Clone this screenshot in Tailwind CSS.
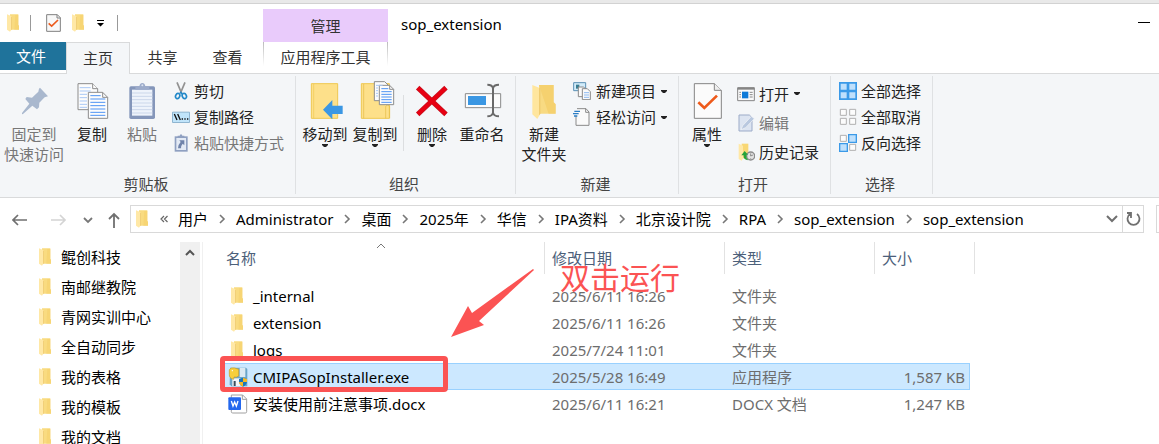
<!DOCTYPE html>
<html lang="zh-CN">
<head>
    <meta charset="UTF-8">
    <meta name="viewport" content="width=device-width, initial-scale=1.0">
    <title>sop_extension</title>
    <script src="https://cdn.jsdelivr.net/npm/@tailwindcss/browser@4"></script>
</head>
<body class="flex h-screen flex-col overflow-hidden bg-white font-['Noto_Sans','Noto_Sans_CJK_SC',sans-serif] text-[15px] leading-5 text-black">
    <!-- Shared icons -->
    <svg class="hidden">
        <symbol id="folder" viewBox="0 0 36 54">
            <path d="M9 1H34V33L36 35V47H9Z" fill="#f9db80"/>
            <path d="M25 3H34V33L36 35V47H22Z" fill="#f5d06c" opacity=".6"/>
            <path d="M0 1L14 7V46L9 53L0 47Z" fill="#ffe8a6"/>
            <path d="M12 8H14V46L12 49Z" fill="#ecc569"/>
        </symbol>
        <symbol id="down" viewBox="0 0 6 3"><path d="M0 0H6V1L4 3H2L0 1Z" fill="#222"/></symbol>
        <symbol id="crumb" viewBox="0 0 6 10"><path d="M1 1L5 5L1 9" fill="none" stroke="#777" stroke-width="1.6"/></symbol>
    </svg>

    <!-- Title bar and tabs -->
    <div class="h-1 shrink-0 border-b border-[#d2d2d2] bg-[#e9e9e9]"></div>
    <header class="flex h-[70px] shrink-0 border-b border-[#d9dadb]">
        <div class="w-[263px]">
            <div class="flex h-[38px] items-center pl-[7px]">
                <svg class="h-[18px] w-3"><use href="#folder"/></svg>
                <span class="ml-[11px] h-4 w-px bg-[#999]"></span>
                <button aria-label="属性" class="ml-[15px]">
                    <svg class="h-[18px] w-[15px]" viewBox="0 0 45 54"><path d="M2 2H34L43 11V52H2Z" fill="#f8f8f8" stroke="#808080" stroke-width="3"/><path d="M33 2V12H43" fill="none" stroke="#808080" stroke-width="3"/><path d="M8 28L17 36L36 18" fill="none" stroke="#ec5a1c" stroke-width="5"/></svg>
                </button>
                <button aria-label="新建文件夹" class="ml-[11px]"><svg class="h-[18px] w-3"><use href="#folder"/></svg></button>
                <button aria-label="自定义快速访问工具栏" class="ml-[13px]">
                    <svg class="h-[7px] w-[7px]" viewBox="0 0 7 7"><path d="M0 0H7V1H0ZM0 3H7L3.500 6.500Z"/></svg>
                </button>
                <span class="ml-[13px] h-4 w-px bg-[#999]"></span>
            </div>
            <nav class="flex h-8 text-[#333]">
                <button class="h-7 w-[66px] bg-[#1f739b] pr-1 text-white">文件</button>
                <button class="h-8 w-16 border border-b-0 border-[#d9dadb] bg-[#f4f6f8] pb-0.5">主页</button>
                <button class="h-[31px] w-[65px] pb-0.5">共享</button>
                <button class="h-[31px] w-[65px] pb-0.5">查看</button>
            </nav>
        </div>
        <div class="mt-[5px] w-[125px] text-center text-[#333]">
            <div class="h-[33px] bg-[#e9cbfb] leading-[34px]">管理</div>
            <div class="flex h-[31px] items-start justify-between">
                <span class="h-6 w-px bg-linear-to-b from-[#bbb] to-white"></span>
                <button class="h-[31px] pb-0.5">应用程序工具</button>
                <span class="h-6 w-px bg-linear-to-b from-[#bbb] to-white"></span>
            </div>
        </div>
        <h1 class="flex-1 pt-[10px] pl-[13px]">sop_extension</h1>
        <button aria-label="最小化" class="mt-[18px] mr-[9px] h-px w-3 bg-black"></button>
    </header>

    <!-- Ribbon -->
    <div class="flex h-[124px] shrink-0 border-b border-[#d9dadb] bg-[#f4f6f8] text-[#222]">
        <section class="mt-0.5 mb-[3px] flex w-[296px] flex-col border-r border-[#dfe1e3]">
            <div class="flex h-[98px]">
                <button class="flex w-[68px] flex-col items-center pt-[7px] text-[#777]">
                    <svg class="mb-[5px] h-9 w-9" viewBox="0 0 108 108"><path d="M72 14L96 40L86 43L70 59L69 73L63 79L49 68L21 93L18 94V90L40 62L28 48L32 42L48 44L67 26L69 17Z" fill="#a9b8ce"/></svg>
                    固定到<br>快速访问
                </button>
                <button class="flex w-12 flex-col items-center pt-[7px]">
                    <svg class="mb-[5px] h-9 w-9" viewBox="0 0 108 108">
                        <g fill="#fcfcfc" stroke="#8c8c8c" stroke-width="3"><path d="M12 2H56L71 17V80H12Z"/><path d="M56 2V17H71" /><path d="M43 28H86L101 43V106H43Z"/><path d="M86 28V43H101" fill="none"/></g>
                        <path d="M17 14H50M17 24H50M17 34H39M17 44H39M17 54H39M17 64H39M17 73H39" stroke="#a9c8f5" stroke-width="3"/>
                        <path d="M49 38H80M49 48H94M49 58H94M49 68H94M49 78H94M49 88H94M49 97H94" stroke="#4e93f3" stroke-width="3"/>
                    </svg>
                    复制
                </button>
                <button class="flex w-[52px] flex-col items-center pt-[7px] text-[#777]">
                    <svg class="mb-[5px] h-9 w-9" viewBox="0 0 108 108">
                        <rect x="16" y="10" width="77" height="98" rx="5" fill="#8496ba"/><path d="M24 20H85V98H24Z" fill="#eef3fb"/>
                        <path d="M24 30H85M24 40H85M24 50H85M24 60H85M24 70H85M24 80H85M24 90H85" stroke="#cbd7ea" stroke-width="3"/>
                        <path d="M34 20V10H46Q48 0 55 0Q62 0 64 10H76V20Z" fill="#9cabca"/><circle cx="55" cy="7" r="3" fill="#dce3ef"/>
                    </svg>
                    粘贴
                </button>
                <div class="flex-1 pt-0.5 pl-1">
                    <button class="flex h-[26px] items-center gap-1">
                        <svg class="h-[18px] w-[18px]" viewBox="0 0 54 54"><path d="M15 1L29 34M39 1L25 34" stroke="#929292" stroke-width="5"/><g fill="none" stroke="#2389c9" stroke-width="5"><path d="M25 29L30 36"/><ellipse cx="17" cy="42" rx="6" ry="8" transform="rotate(25 17 42)"/><ellipse cx="37" cy="42" rx="6" ry="8" transform="rotate(-25 37 42)"/></g></svg>
                        剪切
                    </button>
                    <button class="flex h-[26px] items-center gap-1">
                        <svg class="h-[18px] w-[18px]" viewBox="0 0 54 54"><path d="M1.500 12.500H52.500V43.500H1.500Z" fill="#c0e4fa" stroke="#8fb5d0" stroke-width="3"/><path d="M7 18L15 36M17 18L25 36" stroke="#111" stroke-width="4"/><path d="M29 33H33M37 33H41M45 33H49" stroke="#111" stroke-width="4"/></svg>
                        复制路径
                    </button>
                    <button class="flex h-[26px] items-center gap-1 text-[#777]">
                        <svg class="h-[18px] w-[18px]" viewBox="0 0 54 54"><path d="M8 7H47V53H8Z" fill="#8fa0c1"/><path d="M13 12H42V48H13Z" fill="#e3eaf5"/><path d="M17 11V5H23Q27-3 31 5H37V11Z" fill="#8fa0c1"/><path d="M22 19H37V34L32 29Q27 34 27 43H18Q18 32 26 24Z" fill="#6f83aa"/></svg>
                        粘贴快捷方式
                    </button>
                </div>
            </div>
            <h2 class="pr-[3px] text-center text-[#444]">剪贴板</h2>
        </section>

        <section class="mt-0.5 mb-[3px] flex w-[220px] flex-col border-r border-[#dfe1e3]">
            <div class="flex h-[98px] pl-1">
                <button class="flex w-[50px] flex-col items-center pt-[7px]">
                    <svg class="mb-[5px] h-9 w-9" viewBox="0 0 108 108"><path d="M13 2H92V106H13Z" fill="#fde08a" stroke="#efc851" stroke-width="3"/><path d="M20 3V106" stroke="#efc851" stroke-width="2"/><path d="M48 80L76 51V68H107V93H76V109Z" fill="#3b97e3"/></svg>
                    移动到
                    <svg class="h-[3px] w-1.5"><use href="#down"/></svg>
                </button>
                <button class="flex w-[50px] flex-col items-center pt-[7px]">
                    <svg class="mb-[5px] h-9 w-9 overflow-visible" viewBox="0 0 108 108">
                        <path d="M13 2H97V106H13Z" fill="#fde08a" stroke="#efc851" stroke-width="3"/><path d="M20 3V106M86 106V70Q92 62 98 70V106" fill="none" stroke="#e4bb45" stroke-width="2"/>
                        <g fill="#fcfcfc" stroke="#8c8c8c" stroke-width="3"><path d="M52-4H83L94 7V53H52Z"/><path d="M67 7H98L110 19V65H67Z"/><path d="M98 7V19H110" fill="none"/></g>
                        <path d="M57 7H77M57 15H63M57 23H63M57 31H63M57 39H63" stroke="#a9c8f5" stroke-width="3"/>
                        <path d="M73 17H94M73 26H104M73 34H104M73 42H104M73 50H104M73 58H104" stroke="#4e93f3" stroke-width="3"/>
                    </svg>
                    复制到
                    <svg class="h-[3px] w-1.5"><use href="#down"/></svg>
                </button>
                <span class="mx-[3px] mt-[19px] h-14 w-px bg-[#dcdee0]"></span>
                <button class="flex w-[50px] flex-col items-center pt-[7px]">
                    <svg class="mb-[5px] h-9 w-9" viewBox="0 0 108 108"><path d="M11 14L96 94M96 14L11 94" stroke="#c9101e" stroke-width="15"/><path d="M12 15L95 93M95 15L12 93" stroke="#e80012" stroke-width="11"/></svg>
                    删除
                    <svg class="h-[3px] w-1.5"><use href="#down"/></svg>
                </button>
                <button class="flex w-[50px] flex-col items-center pt-[7px]">
                    <svg class="mb-[5px] h-9 w-9 overflow-visible" viewBox="0 0 108 108"><path d="M4 32H110V74H4Z" fill="#fcfcfc" stroke="#8a8a8a" stroke-width="3"/><path d="M12 39H66V66H12Z" fill="#3b97e3"/><path d="M87 12V94M70 5Q85 5 87 16Q89 5 105 5M70 100Q85 100 87 89Q89 100 105 100" fill="none" stroke="#6a6a6a" stroke-width="6"/></svg>
                    重命名
                </button>
            </div>
            <h2 class="pr-[3px] text-center text-[#444]">组织</h2>
        </section>

        <section class="mt-0.5 mb-[3px] flex w-[163px] flex-col border-r border-[#dfe1e3]">
            <div class="flex h-[98px] pl-[3px]">
                <button class="flex w-[50px] flex-col items-center pt-[7px]">
                    <svg class="mb-[5px] h-9 w-9" viewBox="0 0 108 108"><path d="M39 6H83V58L89 64V92H39Z" fill="#f8da82"/><path d="M39 6H83V58L89 64V92H68Z" fill="#f1c75c" opacity=".5"/><path d="M19 6L43 16V92L34 108L19 94Z" fill="#ffe69e"/><path d="M40 15L43 16V92L40 97Z" fill="#e9bf5b"/></svg>
                    新建<br>文件夹
                </button>
                <div class="pt-0.5 pl-1">
                    <button class="flex h-[26px] items-center gap-[5px]">
                        <svg class="h-[18px] w-[18px]" viewBox="0 0 54 54"><path d="M2 2H38V26H2Z" fill="#d3ecfa" stroke="#5b90b5" stroke-width="3"/><path d="M9 8H19V20H9Z" fill="#3a7d91"/><g fill="#fafafa" stroke="#8a8a8a" stroke-width="3"><path d="M16 15H31L40 22V44H16Z"/><path d="M28 20H43L52 29V53H28Z"/></g><path d="M33 32H48M33 39H48M33 46H48" stroke="#8ebaf0" stroke-width="3"/></svg>
                        新建项目
                        <svg class="h-[3px] w-1.5"><use href="#down"/></svg>
                    </button>
                    <button class="flex h-[26px] items-center gap-[5px]">
                        <svg class="h-[18px] w-[18px]" viewBox="0 0 54 54"><path d="M12 2H39L48 12V52H9V24" fill="#fafafa" stroke="#8a8a8a" stroke-width="3"/><path d="M38 2V13H48" fill="none" stroke="#8a8a8a" stroke-width="3"/><path d="M4 10H21M0 17H17M3 24H13" stroke="#2b7dc4" stroke-width="4"/></svg>
                        轻松访问
                        <svg class="h-[3px] w-1.5"><use href="#down"/></svg>
                    </button>
                </div>
            </div>
            <h2 class="pr-[3px] text-center text-[#444]">新建</h2>
        </section>

        <section class="mt-0.5 mb-[3px] flex w-[152px] flex-col border-r border-[#dfe1e3]">
            <div class="flex h-[98px] pl-[3px]">
                <button class="flex w-[50px] flex-col items-center pt-[7px]">
                    <svg class="mb-[5px] h-9 w-9" viewBox="0 0 108 108"><path d="M16 2H76L97 22V106H16Z" fill="#fbfbfb" stroke="#858585" stroke-width="3"/><path d="M76 2V22H97" fill="#eee" stroke="#858585" stroke-width="3"/><path d="M28 58L46 75L84 38" fill="none" stroke="#ee5a1b" stroke-width="8"/></svg>
                    属性
                    <svg class="h-[3px] w-1.5"><use href="#down"/></svg>
                </button>
                <div class="pt-[3px] pl-[5px]">
                    <button class="flex h-[29px] items-center gap-1">
                        <svg class="h-[18px] w-[18px]" viewBox="0 0 54 54"><path d="M2 8H52V47H2Z" fill="#fafafa" stroke="#858585" stroke-width="3"/><path d="M2 8H52V14H2Z" fill="#858585"/><path d="M15 20H34V40H15Z" fill="#0f7bd8"/><path d="M7 22H12M7 29H12M7 36H12M38 22H47M38 29H47M38 36H47" stroke="#888" stroke-width="3"/></svg>
                        打开
                        <svg class="ml-px h-[3px] w-1.5"><use href="#down"/></svg>
                    </button>
                    <button class="flex h-[29px] items-center gap-1 text-[#777]">
                        <svg class="h-[18px] w-[18px]" viewBox="0 0 54 54"><path d="M6 3H37L45 11V51H6Z" fill="#dce4f1" stroke="#9cabc8" stroke-width="3"/><path d="M12 47L17 35L43 7L52 14L26 41Z" fill="#b9c8df" stroke="#f4f6f8" stroke-width="2"/></svg>
                        编辑
                    </button>
                    <button class="flex h-[29px] items-center gap-1">
                        <svg class="h-[18px] w-[18px]" viewBox="0 0 54 54"><path d="M14 2H34V46H14Z" fill="#f8d775"/><path d="M5 2L18 8V46L14 53L5 48Z" fill="#ffe8a6"/><circle cx="41" cy="39" r="12" fill="#e2e2e2" stroke="#8c8c8c" stroke-width="4"/><path d="M41 31V39L48 36M41 48V46" fill="none" stroke="#666" stroke-width="2"/><path d="M13 37L23 24L33 35H28Q26 44 34 52Q18 50 20 37Z" fill="#25a33a"/></svg>
                        历史记录
                    </button>
                </div>
            </div>
            <h2 class="pr-[3px] text-center text-[#444]">打开</h2>
        </section>

        <section class="mt-0.5 mb-[3px] flex w-[102px] flex-col border-r border-[#dfe1e3]">
            <div class="h-[98px] pt-0.5 pl-2">
                <button class="flex h-[26px] items-center gap-1">
                    <svg class="h-[18px] w-[18px]" viewBox="0 0 54 54"><path d="M0 0H54V54H0Z" fill="#3b9ae8"/><path d="M5 5H23V23H5ZM31 5H49V23H31ZM5 31H23V49H5ZM31 31H49V49H31Z" fill="#bfe0fc"/></svg>
                    全部选择
                </button>
                <button class="flex h-[26px] items-center gap-1">
                    <svg class="h-[18px] w-[18px]" viewBox="0 0 54 54"><path d="M4 4H22V22H4ZM32 4H50V22H32ZM4 31H22V49H4ZM32 31H50V49H32Z" fill="#fcfcfc" stroke="#b0b0b0" stroke-width="3"/></svg>
                    全部取消
                </button>
                <button class="flex h-[26px] items-center gap-1">
                    <svg class="h-[18px] w-[18px]" viewBox="0 0 54 54"><path d="M4 4H22V22H4ZM32 31H50V49H32Z" fill="#fcfcfc" stroke="#b0b0b0" stroke-width="3"/><path d="M29 2H52V25H29ZM2 29H25V52H2Z" fill="#bfe0fc" stroke="#3b9ae8" stroke-width="4"/></svg>
                    反向选择
                </button>
            </div>
            <h2 class="pr-[3px] text-center text-[#444]">选择</h2>
        </section>
    </div>

    <!-- Address bar -->
    <div class="flex h-11 shrink-0 pt-[7px]">
        <div class="flex h-7 w-[130px] shrink-0 items-center pt-0.5 pl-3">
            <button aria-label="后退"><svg class="h-4 w-4" viewBox="0 0 16 16" fill="none" stroke="#707070" stroke-width="1.7"><path d="M15 8H1M6 3L1 8L6 13"/></svg></button>
            <button aria-label="前进" class="ml-[23px]"><svg class="h-4 w-4" viewBox="0 0 16 16" fill="none" stroke="#d4d4d4" stroke-width="1.7"><path d="M0 8H14M9 3L14 8L9 13"/></svg></button>
            <button aria-label="最近浏览的位置" class="ml-4"><svg class="h-2 w-2.5" viewBox="0 0 10 8" fill="none" stroke="#777" stroke-width="1.8"><path d="M1 2L5 6L9 2"/></svg></button>
            <button aria-label="上移" class="ml-[15px]"><svg class="h-4 w-3" viewBox="0 0 12 16" fill="none" stroke="#707070" stroke-width="1.8"><path d="M6 16V2M1 7L6 2L11 7"/></svg></button>
        </div>
        <div class="flex h-7 flex-1 items-center border border-[#d9d9d9] pl-[5px]">
            <svg class="h-[18px] w-3"><use href="#folder"/></svg>
            <svg class="mr-2.5 ml-3 h-2 w-2" viewBox="0 0 8 8" fill="none" stroke="#666" stroke-width="1.2"><path d="M4 1L1 4L4 7M7.500 1L4.500 4L7.500 7"/></svg>
            <nav class="flex flex-1 items-center">
                <a href="#">用户</a>
                <svg class="h-2.5 w-7"><use href="#crumb"/></svg>
                <a href="#">Administrator</a>
                <svg class="h-2.5 w-7"><use href="#crumb"/></svg>
                <a href="#">桌面</a>
                <svg class="h-2.5 w-7"><use href="#crumb"/></svg>
                <a href="#">2025年</a>
                <svg class="h-2.5 w-7"><use href="#crumb"/></svg>
                <a href="#">华信</a>
                <svg class="h-2.5 w-7"><use href="#crumb"/></svg>
                <a href="#">IPA资料</a>
                <svg class="h-2.5 w-7"><use href="#crumb"/></svg>
                <a href="#">北京设计院</a>
                <svg class="h-2.5 w-7"><use href="#crumb"/></svg>
                <a href="#">RPA</a>
                <svg class="h-2.5 w-7"><use href="#crumb"/></svg>
                <a href="#">sop_extension</a>
                <svg class="h-2.5 w-7"><use href="#crumb"/></svg>
                <a href="#">sop_extension</a>
            </nav>
            <button aria-label="展开" class="mr-1"><svg class="h-2 w-3" viewBox="0 0 12 8" fill="none" stroke="#707070" stroke-width="2"><path d="M1 1L6 6L11 1"/></svg></button>
            <button aria-label="刷新" class="flex h-full w-[21px] items-center justify-center border-l border-[#d9d9d9]">
                <svg class="h-4 w-4" viewBox="0 0 16 16" fill="none" stroke="#707070" stroke-width="1.8"><path d="M12 3A6 6 0 1 1 5 3M2 2H6V7"/></svg>
            </button>
        </div>
        <div class="ml-3 h-7 w-[3px] border-y border-l border-[#d9d9d9]"></div>
    </div>

    <div class="flex min-h-0 flex-1">
        <!-- Folder tree -->
        <nav class="w-[180px] shrink-0 overflow-hidden">
            <a href="#" class="flex h-[30px] items-center gap-2.5 pl-[39px] whitespace-nowrap"><svg class="h-[18px] w-3"><use href="#folder"/></svg>鲲创科技</a>
            <a href="#" class="flex h-[30px] items-center gap-2.5 pl-[39px] whitespace-nowrap"><svg class="h-[18px] w-3"><use href="#folder"/></svg>南邮继教院</a>
            <a href="#" class="flex h-[30px] items-center gap-2.5 pl-[39px] whitespace-nowrap"><svg class="h-[18px] w-3"><use href="#folder"/></svg>青网实训中心</a>
            <a href="#" class="flex h-[30px] items-center gap-2.5 pl-[39px] whitespace-nowrap"><svg class="h-[18px] w-3"><use href="#folder"/></svg>全自动同步</a>
            <a href="#" class="flex h-[30px] items-center gap-2.5 pl-[39px] whitespace-nowrap"><svg class="h-[18px] w-3"><use href="#folder"/></svg>我的表格</a>
            <a href="#" class="flex h-[30px] items-center gap-2.5 pl-[39px] whitespace-nowrap"><svg class="h-[18px] w-3"><use href="#folder"/></svg>我的模板</a>
            <a href="#" class="flex h-[30px] items-center gap-2.5 pl-[39px] whitespace-nowrap"><svg class="h-[18px] w-3"><use href="#folder"/></svg>我的文档</a>
        </nav>
        <div class="w-5 shrink-0 bg-[#f0f0f0] pt-[7px] text-center">
            <button aria-label="向上滚动" class="block w-full"><svg class="mx-auto h-2 w-2.5" viewBox="0 0 10 8" fill="none" stroke="#555" stroke-width="2"><path d="M1 6L5 2L9 6"/></svg></button>
        </div>

        <!-- File list -->
        <main class="relative ml-0.5 flex-1 overflow-hidden border-l border-[#f0f0f0] pl-[18px]">
            <table class="w-[754px] table-fixed border-separate border-spacing-0 text-left text-[#6d6d6d]">
                <colgroup>
                    <col class="w-[324px]"><col class="w-[180px]"><col class="w-[150px]"><col class="w-[95px]"><col class="w-[5px]">
                </colgroup>
                <thead class="text-[#4c607a]">
                    <tr>
                        <th class="relative h-10 p-0 align-top font-normal">
                            <div class="h-8 border-r border-[#e2e2e2] pl-[5px] leading-8">名称</div>
                            <svg class="absolute top-px left-[155px] h-1.5 w-2.5" viewBox="0 0 10 6" fill="none" stroke="#777"><path d="M1 5L5 1L9 5"/></svg>
                        </th>
                        <th class="h-10 p-0 align-top font-normal"><div class="h-8 border-r border-[#e2e2e2] pl-[7px] leading-8">修改日期</div></th>
                        <th class="h-10 p-0 align-top font-normal"><div class="h-8 border-r border-[#e2e2e2] pl-[7px] leading-8">类型</div></th>
                        <th colspan="2" class="h-10 p-0 align-top font-normal"><div class="h-8 border-r border-[#e2e2e2] pl-[7px] leading-8">大小</div></th>
                    </tr>
                </thead>
                <tbody>
                    <tr>
                        <td class="h-[27px] p-0 pl-2.5 text-black"><div class="flex items-center gap-2.5"><svg class="h-[18px] w-3"><use href="#folder"/></svg>_internal</div></td>
                        <td class="p-0 pl-[7px]">2025/6/11 16:26</td>
                        <td class="p-0 pl-[7px]">文件夹</td>
                        <td class="p-0"></td><td class="p-0"></td>
                    </tr>
                    <tr>
                        <td class="h-[27px] p-0 pl-2.5 text-black"><div class="flex items-center gap-2.5"><svg class="h-[18px] w-3"><use href="#folder"/></svg>extension</div></td>
                        <td class="p-0 pl-[7px]">2025/6/11 16:26</td>
                        <td class="p-0 pl-[7px]">文件夹</td>
                        <td class="p-0"></td><td class="p-0"></td>
                    </tr>
                    <tr>
                        <td class="h-[27px] p-0 pl-2.5 text-black"><div class="flex items-center gap-2.5"><svg class="h-[18px] w-3"><use href="#folder"/></svg>logs</div></td>
                        <td class="p-0 pl-[7px]">2025/7/24 11:01</td>
                        <td class="p-0 pl-[7px]">文件夹</td>
                        <td class="p-0"></td><td class="p-0"></td>
                    </tr>
                    <tr>
                        <td class="h-[27px] border-y border-[#99d1ff] bg-[#cce8ff] p-0 pl-[7px] text-black">
                            <div class="flex items-center gap-[5px]">
                                <svg class="h-5 w-5" viewBox="0 0 60 60"><path d="M6 2H54L58 6V58H10L5 52Z" fill="#6aa5c8"/><path d="M35 3H52V30H35Z" fill="#dceaf2"/><path d="M13 34H38V57H13Z" fill="#f3f6f8"/><path d="M17 42H23V57H17Z" fill="#3b4e5c"/><path d="M4 8Q8 1 20 3L32 7V27L24 31Q17 26 17 37Q3 34 4 22Z" fill="#f7cf3b" stroke="#cc9d23" stroke-width="2"/><circle cx="13" cy="11" r="2" fill="#fff"/><path d="M45 32L57 36Q59 53 45 59Q31 53 33 36Z" fill="#1976bc"/><path d="M45 32L57 36V45H45ZM45 45V59Q34 55 33 45Z" fill="#f6b827"/></svg>
                                CMIPASopInstaller.exe
                            </div>
                        </td>
                        <td class="border-y border-[#99d1ff] bg-[#cce8ff] p-0 pl-[7px]">2025/5/28 16:49</td>
                        <td class="border-y border-[#99d1ff] bg-[#cce8ff] p-0 pl-[7px]">应用程序</td>
                        <td class="border-y border-r border-[#99d1ff] bg-[#cce8ff] p-0 pr-1 text-right">1,587 KB</td>
                        <td class="p-0"></td>
                    </tr>
                    <tr>
                        <td class="h-[27px] p-0 pl-[7px] text-black">
                            <div class="flex items-center gap-[5px]">
                                <svg class="h-5 w-5" viewBox="0 0 60 60"><path d="M10 3H44L56 15V53Q56 57 52 57H14Q10 57 10 53Z" fill="#fff" stroke="#a0a0a0" stroke-width="3"/><path d="M43 3V16H56" fill="none" stroke="#a0a0a0" stroke-width="3"/><rect x="1" y="10" width="38" height="38" rx="3" fill="#2468ee"/><path d="M10 21L15 36L20 24L25 36L30 21" fill="none" stroke="#fff" stroke-width="4"/></svg>
                                安装使用前注意事项.docx
                            </div>
                        </td>
                        <td class="p-0 pl-[7px]">2025/6/11 16:21</td>
                        <td class="p-0 pl-[7px]">DOCX 文档</td>
                        <td class="p-0 pr-[5px] text-right">1,247 KB</td>
                        <td class="p-0"></td>
                    </tr>
                </tbody>
            </table>

            <!-- Annotations -->
            <div class="absolute top-[114px] left-[17px] h-9 w-[228px] rounded-sm border-5 border-[#fb5353]"></div>
            <svg class="absolute top-[27px] left-[247px] h-[70px] w-[85px]" viewBox="0 0 85 70"><path d="M1 68L18 37L22 44L83 0L84 1L29 52L34 56Z" fill="#fb5353"/></svg>
            <p class="absolute top-[18px] left-[357px] text-[30px] leading-9 text-[#fb5353]">双击运行</p>
        </main>
    </div>
</body>
</html>
